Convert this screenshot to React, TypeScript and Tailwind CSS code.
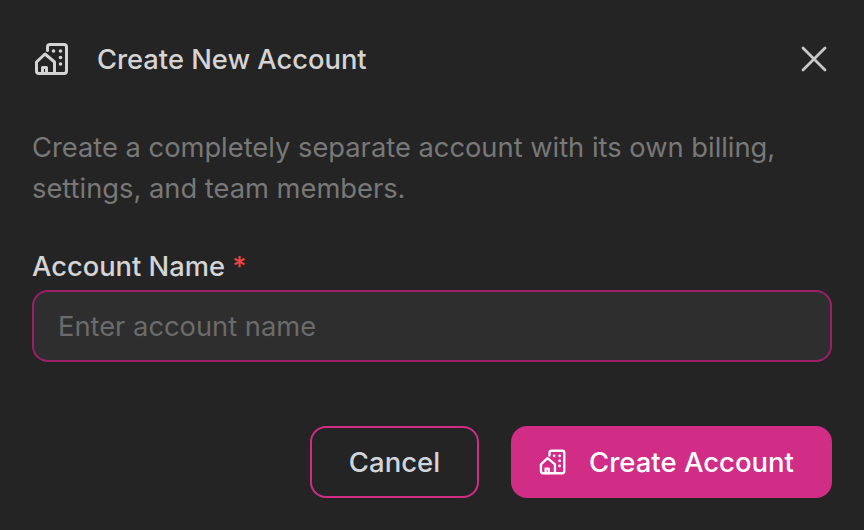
function BuildingIcon({ className }: { className: string }) {
  return (
    <svg viewBox="0 0 36 36" fill="none" className={className} stroke="currentColor" strokeWidth="3" strokeLinecap="round" strokeLinejoin="round">
      <path d="M13.500 9.500V6A2.500 2.500 0 0 1 16 3.500h14A2.500 2.500 0 0 1 32.500 6v24a2.500 2.500 0 0 1-2.500 2.500H5A2.500 2.500 0 0 1 2.500 30V21l8.500-8 9.500 8v11.500" />
      <path d="M8.500 32.500v-6h4v6" />
      <circle cx="19.500" cy="10" r="1.800" fill="currentColor" stroke="none" />
      <circle cx="26.500" cy="10" r="1.800" fill="currentColor" stroke="none" />
      <circle cx="26.500" cy="16.500" r="1.800" fill="currentColor" stroke="none" />
      <circle cx="26.500" cy="23" r="1.800" fill="currentColor" stroke="none" />
    </svg>
  );
}

export default function App() {
  return (
    <div className="w-[864px] h-[530px] bg-[#242424] px-8 pt-[40px] font-['Inter',sans-serif] overflow-hidden">
      <div className="flex items-center h-[38px]">
        <BuildingIcon className="w-9 h-9 ml-[2px] text-[#d4d4d4] shrink-0" />
        <h2 className="ml-[27px] mt-[2px] text-[27.3px] leading-[38px] font-medium text-[#d4d4d4] flex-1">Create New Account</h2>
        <svg viewBox="0 0 28 28" className="w-7 h-7 mr-1 text-[#c8c8c8]" fill="none" stroke="currentColor" strokeWidth="2.800" strokeLinecap="round">
          <path d="M3 3 L25 25 M25 3 L3 25" />
        </svg>
      </div>
      <p className="mt-[49px] text-[27.3px] leading-[41px] text-[#787878]">
        Create a completely separate account with its own billing, settings, and team members.
      </p>
      <label className="block mt-[37px] text-[27.3px] leading-[42px] font-medium text-[#d4d4d4]">
        Account Name <span className="text-[#ef4444]">*</span>
      </label>
      <input
        placeholder="Enter account name"
        className="block mt-[2px] w-full h-[72px] rounded-2xl border-2 border-[#9d1f68] bg-[#2e2e2e] px-6 text-[27.3px] text-[#d4d4d4] placeholder:text-[#6b6b6b] outline-none"
      />
      <div className="flex justify-end gap-8 mt-[64px]">
        <button className="w-[169px] h-[72px] pt-[2px] rounded-2xl border-2 border-[#d12c86] text-[27.5px] font-medium text-[#d1d5db]">Cancel</button>
        <button className="w-[321px] h-[72px] pr-[10px] rounded-2xl bg-[#d12c86] flex items-center justify-center gap-[22px] text-[27.5px] font-medium text-white">
          <BuildingIcon className="w-7 h-7" />
          <span className="pt-[2px]">Create Account</span>
        </button>
      </div>
    </div>
  );
}
